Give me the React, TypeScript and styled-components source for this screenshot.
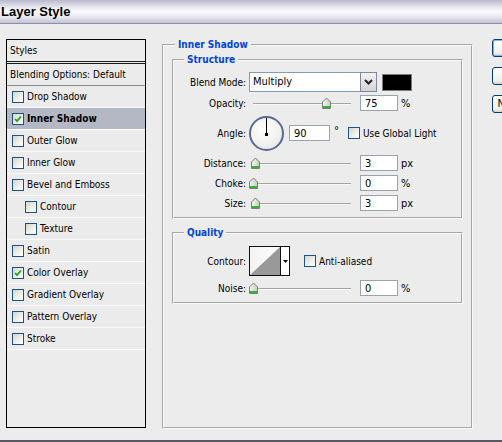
import React from 'react';
import styled, { createGlobalStyle } from 'styled-components';

const FONT = `"DejaVu Sans Condensed", "DejaVu Sans", sans-serif`;

const effects = [
  { label: 'Drop Shadow' },
  { label: 'Inner Shadow', checked: true, selected: true },
  { label: 'Outer Glow' },
  { label: 'Inner Glow' },
  { label: 'Bevel and Emboss' },
  { label: 'Contour', indent: true },
  { label: 'Texture', indent: true },
  { label: 'Satin' },
  { label: 'Color Overlay', checked: true },
  { label: 'Gradient Overlay' },
  { label: 'Pattern Overlay' },
  { label: 'Stroke' },
];

function CheckBox({ checked }: { checked?: boolean }): JSX.Element {
  return (
    <Box>
      {checked && (
        <svg width='8' height='8' viewBox='0 0 8 8'>
          <path d='M1 4 L3 6.2 L7 1.5' fill='none' stroke='#1fa31f' strokeWidth='1.8' />
        </svg>
      )}
    </Box>
  );
}

function ThumbIcon(): JSX.Element {
  return (
    <svg width='11' height='12' viewBox='0 0 11 12'>
      <defs>
        <linearGradient id='thumbFill' x1='0' y1='0' x2='1' y2='0'>
          <stop offset='0' stopColor='#f4f6f4' />
          <stop offset='1' stopColor='#c4ccc4' />
        </linearGradient>
      </defs>
      <path d='M1.5 11.5 V5 L5.5 1 L9.5 5 V11.5 Z' fill='url(#thumbFill)' stroke='#748474' />
      <rect x='2' y='9' width='7' height='2' fill='#2fb52f' />
    </svg>
  );
}

function Slider({ value }: { value: number }): JSX.Element {
  return (
    <SliderBox>
      <Track />
      <Thumb style={{ left: 4 + value * 0.98 - 5.5 }}>
        <ThumbIcon />
      </Thumb>
    </SliderBox>
  );
}

function SliderRow({ label, value, unit }: { label: string; value: number; unit: string }): JSX.Element {
  return (
    <Row $h={20}>
      <Label>{label}</Label>
      <Slider value={value} />
      <NumInput readOnly value={value} />
      <Unit>{unit}</Unit>
    </Row>
  );
}

function App(): JSX.Element {
  return (
    <Window>
      <GlobalStyle />
      <TitleBar>
        <Title>Layer Style</Title>
      </TitleBar>
      <Main>
        <StyleList>
          <ListHeader>Styles</ListHeader>
          <BlendRow>Blending Options: Default</BlendRow>
          {effects.map(e => (
            <ListRow key={e.label} $selected={e.selected} $indent={e.indent}>
              <CheckBox checked={e.checked} />
              <span>{e.label}</span>
            </ListRow>
          ))}
        </StyleList>

        <Panel>
          <Legend $ml={3}>Inner Shadow</Legend>
          <Group $h={166}>
            <Legend>Structure</Legend>
            <GroupBody $bottom={4}>
              <Row $h={22}>
                <Label>Blend Mode:</Label>
                <Select>
                  <SelectField>Multiply</SelectField>
                  <DropButton>
                    <svg width='9' height='6' viewBox='0 0 9 6'>
                      <path d='M1 1 L4.5 4.5 L8 1' fill='none' stroke='#222' strokeWidth='2' />
                    </svg>
                  </DropButton>
                </Select>
                <Swatch />
              </Row>
              <SliderRow label='Opacity:' value={75} unit='%' />
              <Row $h={40}>
                <Label>Angle:</Label>
                <Dial>
                  <DialHand />
                  <DialPin />
                </Dial>
                <NumInput readOnly value={90} $w={41} $ml={5} />
                <Degree>°</Degree>
                <CheckLabel $ml={9}>
                  <CheckBox />
                  <span>Use Global Light</span>
                </CheckLabel>
              </Row>
              <SliderRow label='Distance:' value={3} unit='px' />
              <SliderRow label='Choke:' value={0} unit='%' />
              <SliderRow label='Size:' value={3} unit='px' />
            </GroupBody>
          </Group>

          <Group $h={78} $mt={7}>
            <Legend>Quality</Legend>
            <GroupBody $bottom={4}>
              <Row $h={34}>
                <Label>Contour:</Label>
                <ContourPicker>
                  <ContourPreview>
                    <svg width='30' height='28' viewBox='0 0 30 28'>
                      <polygon points='0,28 30,0 30,28' fill='#999999' />
                    </svg>
                  </ContourPreview>
                  <ContourArrow>
                    <svg width='5' height='3' viewBox='0 0 5 3'>
                      <polygon points='0,0 5,0 2.5,3' fill='#000' />
                    </svg>
                  </ContourArrow>
                </ContourPicker>
                <CheckLabel $ml={14}>
                  <CheckBox />
                  <span>Anti-aliased</span>
                </CheckLabel>
              </Row>
              <SliderRow label='Noise:' value={0} unit='%' />
            </GroupBody>
          </Group>
        </Panel>

        <ButtonColumn>
          <Button $default>OK</Button>
          <Button>Cancel</Button>
          <Button>New Style...</Button>
        </ButtonColumn>
      </Main>
      <BottomEdge />
    </Window>
  );
}

export default App;

const GlobalStyle = createGlobalStyle`
  html, body {
    margin: 0;
    padding: 0;
    background: #ececec;
  }
  body {
    font-family: ${FONT};
    font-stretch: condensed;
    font-size: 10px;
    color: #000;
  }
`;

const Window = styled.div`
  width: 502px;
  height: 442px;
  overflow: hidden;
  display: flex;
  flex-direction: column;
  background: #ececec;
`;

const TitleBar = styled.div`
  height: 23px;
  flex: none;
  border-bottom: 1px solid #8f8fa8;
  background: linear-gradient(
    to bottom,
    #b9b9cd 0%,
    #e2e2ea 28%,
    #fafafc 50%,
    #e6e6ee 75%,
    #c2c2d2 100%
  );
`;

const Title = styled.div`
  font-family: "Liberation Sans", Arial, sans-serif;
  font-stretch: normal;
  font-size: 13px;
  font-weight: bold;
  line-height: 23px;
  padding-left: 1px;
  white-space: nowrap;
`;

const Main = styled.div`
  flex: 1;
  display: flex;
  align-items: flex-start;
  padding: 15px 0 0 6px;
  min-height: 0;
`;

const StyleList = styled.div`
  box-sizing: border-box;
  width: 140px;
  height: 389px;
  flex: none;
  border: 1px solid #000;
  background: #ececec;
`;

const ListHeader = styled.div`
  height: 21px;
  line-height: 21px;
  padding-left: 3px;
  border-bottom: 3px double #1a1a1a;
`;

const BlendRow = styled.div`
  height: 21px;
  line-height: 21px;
  padding-left: 3px;
  background: #ebebeb;
  border-bottom: 1px solid #8a8a8a;
  white-space: nowrap;
`;

const ListRow = styled.div<{ $selected?: boolean; $indent?: boolean }>`
  height: 21px;
  display: flex;
  align-items: center;
  gap: 3px;
  padding-left: ${p => (p.$indent ? 18 : 5)}px;
  background: ${p => (p.$selected ? '#b4b7c4' : '#ebebeb')};
  border-bottom: 1px solid #fbfbfb;
  font-weight: ${p => (p.$selected ? 'bold' : 'normal')};
  white-space: nowrap;
`;

const Box = styled.span`
  box-sizing: border-box;
  width: 12px;
  height: 12px;
  flex: none;
  display: inline-flex;
  align-items: center;
  justify-content: center;
  border: 1px solid #1c5180;
  background: linear-gradient(135deg, #d6d6d0 0%, #f0f0ec 60%, #ffffff 100%);
`;

const Panel = styled.fieldset`
  box-sizing: border-box;
  width: 311px;
  height: 391px;
  flex: none;
  margin: -1px 0 0 16px;
  padding: 2px 8px 0;
  border: 2px groove #fafafa;
  min-width: 0;
`;

const Legend = styled.legend<{ $ml?: number }>`
  margin-left: ${p => (p.$ml === undefined ? 10 : p.$ml)}px;
  padding: 0 3px;
  line-height: 13px;
  font-weight: bold;
  color: #0046d5;
`;

const Group = styled.fieldset<{ $h: number; $mt?: number }>`
  box-sizing: border-box;
  height: ${p => p.$h}px;
  margin: ${p => p.$mt || 0}px 0 0;
  padding: 0;
  border: 2px groove #fafafa;
  min-width: 0;
`;

const GroupBody = styled.div<{ $bottom: number }>`
  padding: 5px 0 ${p => p.$bottom}px;
`;

const Row = styled.div<{ $h: number }>`
  display: flex;
  align-items: center;
  height: ${p => p.$h}px;
  white-space: nowrap;
`;

const Label = styled.span`
  width: 72px;
  flex: none;
  margin-right: 3px;
  text-align: right;
`;

const Select = styled.div`
  display: flex;
  width: 128px;
  height: 20px;
  flex: none;
`;

const SelectField = styled.div`
  box-sizing: border-box;
  flex: 1;
  border: 1px solid #7f9db9;
  background: #fff;
  padding-left: 3px;
  line-height: 18px;
  font-size: 11px;
`;

const DropButton = styled.div`
  box-sizing: border-box;
  width: 17px;
  flex: none;
  margin-left: -1px;
  display: flex;
  align-items: center;
  justify-content: center;
  border: 1px solid #8088a0;
  background: linear-gradient(to bottom, #f2f2f2, #d4d4d8);
`;

const Swatch = styled.div`
  box-sizing: border-box;
  width: 30px;
  height: 17px;
  flex: none;
  margin-left: 5px;
  background: #000;
  border: 1px solid #7b7b7b;
`;

const SliderBox = styled.div`
  position: relative;
  width: 111px;
  height: 100%;
  flex: none;
  display: flex;
  align-items: center;
`;

const Track = styled.div`
  flex: 1;
  height: 1px;
  margin: 1px 9px 0 4px;
  border-top: 1px solid #a4a4a4;
  background: #fbfbf4;
`;

const Thumb = styled.div`
  position: absolute;
  top: 50%;
  margin-top: -6px;
  width: 11px;
  height: 12px;
  line-height: 0;
`;

const NumInput = styled.input<{ $w?: number; $ml?: number }>`
  box-sizing: border-box;
  width: ${p => p.$w || 38}px;
  height: 16px;
  flex: none;
  margin: 0 0 0 ${p => p.$ml || 0}px;
  padding: 0 0 0 4px;
  border: 1px solid #97a3ae;
  background: #fff;
  font: inherit;
  font-size: 11px;
  color: #000;
  outline: none;
`;

const Unit = styled.span`
  margin-left: 3px;
  font-size: 11px;
`;

const Degree = styled.span`
  margin-left: 4px;
  margin-top: -6px;
  font-size: 11px;
`;

const CheckLabel = styled.span<{ $ml: number }>`
  display: flex;
  align-items: center;
  gap: 3px;
  margin-left: ${p => p.$ml}px;
`;

const Dial = styled.div`
  position: relative;
  box-sizing: border-box;
  width: 35px;
  height: 35px;
  flex: none;
  border: 2px solid #5a6a90;
  border-radius: 50%;
  background: radial-gradient(circle at 40% 35%, #ffffff 0%, #f0f0ee 60%, #dcdcdc 100%);
`;

const DialHand = styled.div`
  position: absolute;
  left: 15px;
  top: 0;
  width: 1px;
  height: 16px;
  background: #000;
`;

const DialPin = styled.div`
  position: absolute;
  left: 14px;
  top: 15px;
  width: 3px;
  height: 3px;
  background: #000;
`;

const ContourPicker = styled.div`
  box-sizing: border-box;
  display: flex;
  width: 41px;
  height: 30px;
  flex: none;
  border: 1px solid #111;
  background: #fff;
`;

const ContourPreview = styled.div`
  width: 30px;
  height: 28px;
  line-height: 0;
  background: linear-gradient(to right, #f2f2f2, #ffffff);
`;

const ContourArrow = styled.div`
  flex: 1;
  display: flex;
  align-items: center;
  justify-content: center;
  border-left: 1px solid #111;
`;

const ButtonColumn = styled.div`
  display: flex;
  flex-direction: column;
  gap: 10px;
  margin-left: 19px;
  flex: none;
`;

const Button = styled.div<{ $default?: boolean }>`
  box-sizing: border-box;
  width: 70px;
  height: 18px;
  line-height: 16px;
  text-align: center;
  white-space: nowrap;
  border: 1px solid #003c74;
  border-radius: 3px;
  background: linear-gradient(to bottom, #ffffff, #f0f0ea 80%, #d8d2c6);
  box-shadow: ${p => (p.$default ? 'inset 0 0 0 1px #8fb0ea' : 'none')};
  font-size: 11px;
`;

const BottomEdge = styled.div`
  height: 2px;
  flex: none;
  background: #585864;
`;
